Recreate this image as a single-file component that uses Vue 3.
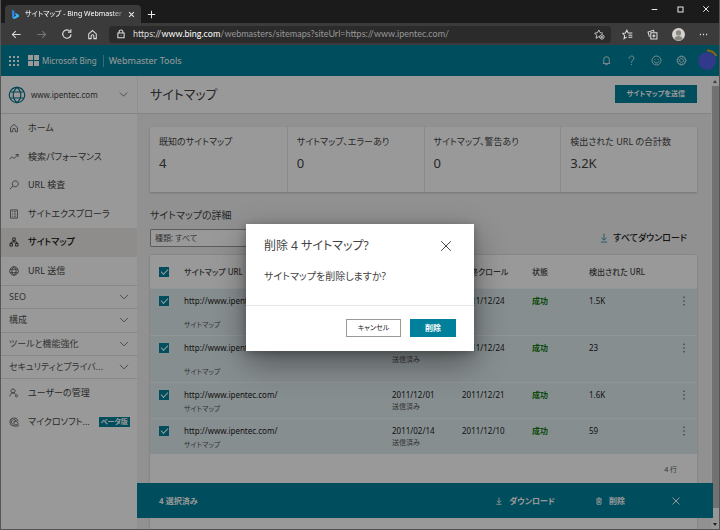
<script setup>
import { h, ref, computed } from 'vue'

const glyphs = {
  back: ['M14 8H2', 'M7 3L2 8l5 5'],
  forward: ['M2 8h12', 'M9 3l5 5-5 5'],
  reload: ['M13.5 8.5A5.6 5.6 0 1 1 12 4.2', 'M13.2 1.5v4h-4'],
  house: ['M2.5 7.2L8 2.2l5.500 5V14H10v-3.500a2 2 0 0 0-4 0V14H2.500z'],
  lock: ['M3 6.500h10v7.500H3z', 'M5 6.500V4.500a3 3 0 0 1 6 0v2', 'M8 9.800v1'],
  starAdd: ['M9 12l-2-1-4 2.500.8-4.500L1 6l4-.6L7 1.500l2 3.900 4 .6', 'M11.500 8.300a3.200 3.200 0 1 0 .01 0z', 'M11.500 9.800v3.400M9.800 11.500h3.400'],
  starList: ['M7 11.500l-4 2.500.8-4.500L1 6.300l4-.6L7 1.800l2 3.900h6', 'M9.500 9h5.500', 'M9.500 12h5.500'],
  collections: ['M5.500 5.500h9v9h-9z', 'M10 7.800v4.400M7.800 10h4.400', 'M3.500 11.500L1.500 4.500l8-2.500 1 3'],
  dots: ['M1.500 8h2M7 8h2M12.500 8h2'],
  minimize: ['M3 8h10'],
  maximize: ['M3.500 3.500h9v9h-9z'],
  close: ['M2.500 2.500l11 11M13.500 2.500l-11 11'],
  plus: ['M8 1.500v13M1.500 8h13'],
  bell: ['M4 11.500V6.500a4 4 0 0 1 8 0v5l1 1H3z', 'M6.500 14h3'],
  question: ['M4.500 5.300c0-5 7-4.800 7-.8 0 3-3.500 3-3.500 6.500', 'M8 13v1.500'],
  smile: ['M8 1.500a6.500 6.500 0 1 0 .01 0z', 'M5.500 5.700v1.300M10.500 5.700v1.300', 'M4.500 9c1 3.500 6 3.500 7 0'],
  gear: ['M6.700 1.500h2.600l.5 1.800 1.700-.8 1.900 1.900-.8 1.700 1.900.6v2.600l-1.900.6.8 1.700-1.900 1.900-1.700-.8-.5 1.800H6.700l-.5-1.800-1.700.8-1.900-1.900.8-1.700-1.900-.6V6.700l1.900-.6-.8-1.700 1.900-1.900 1.700.8z', 'M8 5.200a2.800 2.800 0 1 0 .01 0z'],
  globe: ['M8 1.200a6.800 6.800 0 1 0 .01 0z', 'M8 1.200c-4.500 4-4.500 9.600 0 13.600c4.500-4 4.500-9.600 0-13.600z', 'M2 5.300h12M2 10.700h12'],
  trend: ['M1 11.500l4-4 3 3 6.500-6.500', 'M10.500 4h4v4'],
  search: ['M10 1.300a4.800 4.800 0 1 0 .01 0z', 'M6.600 9.500L1.200 14.800'],
  list: ['M2.500 1.500h11v13h-11z', 'M5 4.500h1.500M8 4.500h3M5 8h1.500M8 8h3M5 11.500h1.500M8 11.500h3'],
  tree: ['M6 1.500h4v4H6z', 'M1.500 10.500h4v4h-4z', 'M10.500 10.500h4v4h-4z', 'M8 5.500V8M3.500 10.500V8h9v2.500'],
  user: ['M6.500 1.500a3.300 3.300 0 1 0 .01 0z', 'M1.500 13.500c0-7 8-7 9-3', 'M12 10.700a1.800 1.800 0 1 0 .01 0z'],
  clarity: ['M14.500 7A6.600 6.600 0 1 0 7 14.500', 'M11.800 7A4 4 0 1 0 6 11.500', 'M8 7h3.500L14.500 10v4.500H8z', 'M10 12h2.500'],
  chevron: ['M1.500 4.500L8 11l6.500-6.500'],
  download: ['M8 1v10', 'M4 7.500L8 11.500l4-4', 'M3 14.500h10'],
  trash: ['M2.500 4h11', 'M6 4V2h4v2', 'M4 4v10.500h8V4', 'M6.700 6.500v5.500M9.300 6.500v5.500'],
  more: ['M8 1v2M8 7v2M8 13v2']
}

const Icon = (props) =>
  h(
    'svg',
    {
      viewBox: '0 0 16 16',
      width: props.size,
      height: props.size,
      fill: 'none',
      stroke: 'currentColor',
      'stroke-width': props.weight,
      'aria-hidden': 'true'
    },
    glyphs[props.name].map((d) => h('path', { d }))
  )
Icon.props = { name: String, size: { default: 10 }, weight: { default: 1.2 } }

const nav = [
  { icon: 'house', label: 'ホーム' },
  { icon: 'trend', label: '検索パフォーマンス' },
  { icon: 'search', label: 'URL 検査' },
  { icon: 'list', label: 'サイトエクスプローラ' },
  { icon: 'tree', label: 'サイトマップ', active: true },
  { icon: 'globe', label: 'URL 送信' }
]
const groups = ['SEO', '構成', 'ツールと機能強化', 'セキュリティとプライバ...']
const tools = [
  { icon: 'bell', label: '通知' },
  { icon: 'question', label: 'ヘルプ' },
  { icon: 'smile', label: 'フィードバック' },
  { icon: 'gear', label: '設定' }
]
const stats = [
  { label: '既知のサイトマップ', value: '4' },
  { label: 'サイトマップ、エラーあり', value: '0' },
  { label: 'サイトマップ、警告あり', value: '0' },
  { label: '検出された URL の合計数', value: '3.2K' }
]
const rows = ref([
  { url: 'http://www.ipentec.com/', sent: '2011/12/01', crawl: '2011/12/24', count: '1.5K', tall: true, checked: true },
  { url: 'http://www.ipentec.com/', sent: '2011/12/01', crawl: '2011/12/24', count: '23', tall: true, checked: true },
  { url: 'http://www.ipentec.com/', sent: '2011/12/01', crawl: '2011/12/21', count: '1.6K', checked: true },
  { url: 'http://www.ipentec.com/', sent: '2011/02/14', crawl: '2011/12/10', count: '59', checked: true }
])
const allChecked = computed({
  get: () => rows.value.every((r) => r.checked),
  set: (v) => rows.value.forEach((r) => (r.checked = v))
})
const selected = computed(() => rows.value.filter((r) => r.checked).length)
const dialogOpen = ref(true)
</script>

<template>
  <div class="window">
    <div class="tabstrip">
      <div class="tab">
        <svg class="bing" viewBox="0 0 16 16" width="9" height="11" aria-hidden="true">
          <path d="M2 0l4 1.500v10L2 14z" fill="#2a8af0" />
          <path d="M7 5l7 3.500v3.500L6 16l-4-2 7-4z" fill="#35b8f0" />
        </svg>
        <span class="tab-title">サイトマップ - Bing Webmaster Too</span>
        <button class="plain" aria-label="タブを閉じる"><Icon name="close" :size="7" :weight="2.4" /></button>
      </div>
      <button class="plain new-tab" aria-label="新しいタブ"><Icon name="plus" :size="9" :weight="1.8" /></button>
      <div class="controls">
        <button class="plain" aria-label="最小化"><Icon name="minimize" :size="9" :weight="1.8" /></button>
        <button class="plain" aria-label="最大化"><Icon name="maximize" :size="9" :weight="1.8" /></button>
        <button class="plain" aria-label="閉じる"><Icon name="close" :size="8" :weight="2" /></button>
      </div>
    </div>

    <div class="toolbar">
      <button class="plain" aria-label="戻る"><Icon name="back" :size="11" :weight="1.5" /></button>
      <button class="plain faded" aria-label="進む"><Icon name="forward" :size="11" :weight="1.5" /></button>
      <button class="plain" aria-label="更新"><Icon name="reload" :size="12" :weight="1.5" /></button>
      <button class="plain" aria-label="ホーム"><Icon name="house" :size="11" :weight="1.5" /></button>
      <div class="address">
        <Icon name="lock" :size="10" :weight="1.7" />
        <span class="url"><b>https://<i>www.bing.com</i></b>/webmasters/sitemaps?siteUrl=https://www.ipentec.com/</span>
        <button class="plain" aria-label="お気に入りに追加"><Icon name="starAdd" :size="11" /></button>
      </div>
      <div class="extras">
        <button class="plain" aria-label="お気に入り"><Icon name="starList" :size="11" :weight="1.5" /></button>
        <button class="plain" aria-label="コレクション"><Icon name="collections" :size="11" :weight="1.5" /></button>
        <button class="plain" aria-label="プロフィール">
          <svg viewBox="0 0 16 16" width="13" height="13" aria-hidden="true">
            <circle cx="8" cy="8" r="8" fill="#d6d3cf" />
            <circle cx="8" cy="6" r="3.200" fill="#8a8682" />
            <path d="M3 13.500c0-5 10-5 10 0a8 8 0 0 1-10 0z" fill="#8a8682" />
          </svg>
        </button>
        <button class="plain" aria-label="その他"><Icon name="dots" :size="9" :weight="2.6" /></button>
      </div>
    </div>

    <div class="page">
      <header class="header">
        <svg class="waffle" viewBox="0 0 10 10" width="10" height="10" aria-hidden="true">
          <path d="M1 0v10M5 0v10M9 0v10" stroke="currentColor" stroke-width="2" stroke-dasharray="2 2" />
        </svg>
        <svg class="ms" viewBox="0 0 11 11" width="11" height="11" aria-hidden="true">
          <path d="M0 0h5v5H0zM6 0h5v5H6zM0 6h5v5H0zM6 6h5v5H6z" fill="currentColor" />
        </svg>
        <span class="brand">Microsoft Bing</span>
        <span class="product">Webmaster Tools</span>
        <div class="tools">
          <button v-for="t in tools" :key="t.icon" class="plain" :aria-label="t.label">
            <Icon :name="t.icon" :size="11" />
          </button>
          <svg class="avatar" viewBox="0 0 21 22" width="21" height="22" aria-hidden="true">
            <circle cx="10" cy="12" r="9" fill="#5260e6" />
            <path d="M10 1.500a10.500 10.500 0 0 1 9.300 5.500" fill="none" stroke="#f0ae10" stroke-width="2" />
          </svg>
        </div>
      </header>

      <div class="columns">
        <nav class="sidebar">
          <button class="site">
            <Icon name="globe" :size="18" :weight="1" class="site-globe" />
            <span>www.ipentec.com</span>
            <Icon name="chevron" :size="9" />
          </button>
          <div class="links six">
            <a v-for="n in nav" :key="n.label" href="#" class="link" :class="{ active: n.active }">
              <Icon :name="n.icon" :size="10" />{{ n.label }}
            </a>
          </div>
          <div class="groups">
            <button v-for="g in groups" :key="g" class="group">{{ g }}<Icon name="chevron" :size="10" /></button>
          </div>
          <div class="links two">
            <a href="#" class="link"><Icon name="user" :size="10" />ユーザーの管理</a>
            <a href="#" class="link"><Icon name="clarity" :size="10" />マイクロソフト...<span class="beta">ベータ版</span></a>
          </div>
        </nav>

        <main class="main">
          <div class="title-row">
            <h1>サイトマップ</h1>
            <button class="primary submit">サイトマップを送信</button>
          </div>

          <div class="content">
            <section class="stats">
              <div v-for="s in stats" :key="s.label" class="stat">
                <span class="stat-label">{{ s.label }}</span>
                <span class="stat-value">{{ s.value }}</span>
              </div>
            </section>

            <h2>サイトマップの詳細</h2>
            <div class="filters">
              <select class="filter" aria-label="種類">
                <option>種類: すべて</option>
              </select>
              <a href="#" class="download-all"><Icon name="download" :size="10" />すべてダウンロード</a>
            </div>

            <div class="panel">
              <table>
                <colgroup>
                  <col class="c-check" />
                  <col />
                  <col class="c-date" />
                  <col class="c-date" />
                  <col class="c-status" />
                  <col class="c-count" />
                  <col class="c-more" />
                </colgroup>
                <thead>
                  <tr>
                    <th><input v-model="allChecked" type="checkbox" aria-label="すべて選択" /></th>
                    <th>サイトマップ URL</th>
                    <th>送信日</th>
                    <th>最終クロール</th>
                    <th>状態</th>
                    <th>検出された URL</th>
                    <th></th>
                  </tr>
                </thead>
                <tbody>
                  <tr v-for="(r, i) in rows" :key="i" :class="{ tall: r.tall, chosen: r.checked }">
                    <td><input v-model="r.checked" type="checkbox" :aria-label="r.url" /></td>
                    <td class="address-cell">{{ r.url }}<small>サイトマップ</small></td>
                    <td>{{ r.sent }}<small>送信済み</small></td>
                    <td>{{ r.crawl }}</td>
                    <td class="ok">成功</td>
                    <td>{{ r.count }}</td>
                    <td><button class="plain row-more" aria-label="操作"><Icon name="more" :size="10" :weight="1.6" /></button></td>
                  </tr>
                </tbody>
              </table>
              <div class="total">{{ rows.length }} 行</div>
            </div>
          </div>
        </main>

        <div class="scrollbar" aria-hidden="true">
          <span class="arrow up"></span>
          <span class="thumb"></span>
          <span class="arrow down"></span>
        </div>
      </div>

      <div class="actions">
        <span class="count">{{ selected }} 選択済み</span>
        <button class="plain"><Icon name="download" :size="8" :weight="1.8" />ダウンロード</button>
        <button class="plain delete" @click="dialogOpen = true"><Icon name="trash" :size="8" :weight="1.8" />削除</button>
        <button class="plain" aria-label="選択を解除" @click="allChecked = false"><Icon name="close" :size="10" :weight="1.6" /></button>
      </div>

      <div v-if="dialogOpen" class="overlay">
        <div class="dialog" role="dialog" aria-labelledby="dialog-title">
          <div class="dialog-body">
            <div class="dialog-head">
              <h3 id="dialog-title">削除 4 サイトマップ?</h3>
              <button class="plain" aria-label="閉じる" @click="dialogOpen = false"><Icon name="close" :size="14" :weight="1.1" /></button>
            </div>
            <p>サイトマップを削除しますか?</p>
          </div>
          <div class="dialog-foot">
            <button class="secondary" @click="dialogOpen = false">キャンセル</button>
            <button class="primary" @click="dialogOpen = false">削除</button>
          </div>
        </div>
      </div>
    </div>
  </div>
</template>

<style>
body {
  background: #1b1b1b;
}
</style>

<style scoped>
.window,
.window * {
  box-sizing: border-box;
}
.window {
  display: flex;
  flex-direction: column;
  min-height: 100vh;
  font: 9px/12px 'Noto Sans', 'Noto Sans CJK JP', sans-serif;
  font-feature-settings: 'palt';
  color: #444;
  border: solid #555;
  border-width: 0 1px 1px;
}
h1, h2, h3, p {
  margin: 0;
  font-weight: 400;
}
svg {
  flex: none;
  display: block;
}
a {
  color: inherit;
  text-decoration: none;
}
button {
  font: inherit;
  font-feature-settings: inherit;
  color: inherit;
  border: 0;
  border-radius: 0;
  padding: 0;
  cursor: pointer;
}
.plain {
  display: flex;
  align-items: center;
  justify-content: center;
  background: none;
}

/* Browser chrome */
.tabstrip {
  display: flex;
  align-items: center;
  height: 23px;
  padding-left: 4px;
  background: #1b1b1b;
  color: #e8e8e8;
}
.tab {
  display: flex;
  align-items: center;
  align-self: flex-end;
  gap: 5px;
  width: 136px;
  height: 18px;
  padding: 0 6px;
  background: #3b3b3b;
  border-radius: 4px 4px 0 0;
}
.tab-title {
  flex: 1;
  overflow: hidden;
  white-space: nowrap;
  font-size: 7px;
  color: #fff;
  mask-image: linear-gradient(90deg, #000 88%, #0005);
}
.new-tab {
  align-self: flex-end;
  height: 18px;
  margin-left: 6px;
}
.controls {
  display: flex;
  gap: 17px;
  margin: 0 9px 5px auto;
}
.toolbar {
  display: flex;
  align-items: center;
  gap: 14px;
  height: 22px;
  padding-left: 10px;
  background: #3b3b3b;
  color: #ddd;
}
.faded {
  color: #777;
}
.address {
  flex: 1;
  display: flex;
  align-items: center;
  gap: 7px;
  height: 17px;
  margin-left: -3px;
  padding: 0 6px 0 7px;
  background: #2b2b2b;
  border-radius: 3px;
}
.url {
  flex: 1;
  font-family: Lato, 'Noto Sans', sans-serif;
  font-size: 9px;
  color: #999;
  white-space: nowrap;
  overflow: hidden;
}
.url b {
  font-weight: 400;
  color: #ddd;
}
.url i {
  font-style: normal;
  color: #fff;
}
.extras {
  display: flex;
  align-items: center;
  gap: 14px;
  margin: 0 11px 0 -3px;
}

/* Page */
.page {
  position: relative;
  flex: 1;
  display: flex;
  flex-direction: column;
}
.header {
  display: flex;
  align-items: center;
  height: 31px;
  padding: 0 3px 0 8px;
  background: #00809b;
  color: #fff;
}
.ms {
  margin-left: 9px;
}
.brand {
  margin-left: 3px;
  padding-right: 6px;
  border-right: 1px solid #66b3c3;
  font-size: 8px;
}
.product {
  margin-left: 5px;
}
.tools {
  display: flex;
  align-items: center;
  gap: 14px;
  margin-left: auto;
}
.avatar {
  margin: -2px -2px 0 -4px;
}
.columns {
  flex: 1;
  display: flex;
  background: #f2f2f2;
}
.sidebar {
  width: 136px;
  background: #fff;
}
.site {
  display: flex;
  align-items: center;
  gap: 5px;
  width: 100%;
  height: 38px;
  padding: 0 9px 0 7px;
  background: #fff;
  border-bottom: 1px solid #ddd;
  text-align: left;
}
.site span {
  flex: 1;
  font-size: 8px;
}
.site-globe {
  color: #00708a;
}
.links {
  display: grid;
  grid-auto-rows: 1fr;
}
.six {
  height: 171px;
}
.two {
  height: 57px;
}
.link {
  display: flex;
  align-items: center;
  gap: 9px;
  padding: 0 9px 0 8px;
  white-space: nowrap;
}
.active {
  background: #edebe9;
  font-weight: 500;
  color: #111;
}
.groups {
  display: grid;
  grid-auto-rows: 1fr;
  height: 94px;
  border-bottom: 1px solid #e1e1e1;
}
.group {
  display: flex;
  align-items: center;
  justify-content: space-between;
  padding: 0 8px;
  background: #fff;
  border-top: 1px solid #e1e1e1;
  color: #555;
}
.beta {
  margin-left: auto;
  padding: 0 2px;
  line-height: 10px;
  font-size: 7px;
  font-weight: 700;
  background: #00809b;
  color: #fff;
}
.main {
  flex: 1;
  min-width: 0;
  display: flex;
  flex-direction: column;
}
.title-row {
  display: flex;
  align-items: center;
  justify-content: space-between;
  height: 38px;
  padding: 0 14px 2px 12px;
  background: #fff;
  border-bottom: 1px solid #ddd;
  border-left: 1px solid #eee;
}
h1 {
  font-size: 13px;
  line-height: 18px;
}
.primary {
  background: #00809b;
  color: #fff;
  font-weight: 700;
}
.submit {
  height: 18px;
  padding: 0 12px;
  font-size: 7px;
}
.content {
  flex: 1;
  display: flex;
  flex-direction: column;
  padding: 13px 14px 0 13px;
}
.stats {
  display: grid;
  grid-template-columns: repeat(4, 1fr);
  background: #fff;
  box-shadow: 0 1px 2px #0003;
}
.stat {
  display: flex;
  flex-direction: column;
  gap: 6px;
  height: 65px;
  padding: 9px;
  white-space: nowrap;
}
.stat + .stat {
  border-left: 1px solid #e5e5e5;
}
.stat-value {
  font-size: 13px;
  line-height: 18px;
}
h2 {
  margin-top: 15px;
  font-size: 10px;
  line-height: 16px;
}
.filters {
  display: flex;
  align-items: center;
  justify-content: space-between;
  margin-top: 6px;
  padding-right: 10px;
}
.filter {
  width: 130px;
  height: 18px;
  padding: 0 4px;
  appearance: none;
  border: 1px solid #999;
  border-radius: 1px;
  background: #fff;
  font: inherit;
  font-size: 8px;
  font-feature-settings: inherit;
  color: #555;
}
.download-all {
  display: flex;
  align-items: center;
  gap: 4px;
  font-weight: 500;
  color: #222;
}
.download-all svg {
  color: #00809b;
}
.panel {
  flex: 1;
  margin-top: 8px;
  background: #fff;
  box-shadow: 0 0 2px #0003;
}
table {
  width: 100%;
  table-layout: fixed;
  border-collapse: collapse;
}
.c-check { width: 34px; }
.c-date { width: 70px; }
.c-status { width: 57px; }
.c-count { width: 90px; }
.c-more { width: 18px; }
th,
td {
  padding: 0;
  text-align: left;
  white-space: nowrap;
}
th {
  height: 33px;
  padding-top: 1px;
  font-size: 8px;
  font-weight: 500;
}
td {
  height: 36px;
  padding-top: 6px;
  vertical-align: top;
  border-top: 1px solid #f2f8f9;
  font-size: 8px;
  line-height: 12px;
  color: #222;
}
.tall td {
  height: 47px;
}
th:first-child,
td:first-child {
  padding-left: 9px;
}
.chosen {
  background: #e1edf0;
}
small {
  display: block;
  font-size: 7px;
  line-height: 12px;
  color: #555;
}
.address-cell small {
  padding-top: 2px;
}
.tall .address-cell small {
  padding-top: 12px;
}
.chosen .ok,
.ok {
  color: #107c10;
  font-weight: 700;
}
input {
  display: grid;
  place-items: center;
  width: 10px;
  height: 10px;
  margin: 1px 0 0;
  appearance: none;
  background: #fff;
  border: 1px solid #00809b;
}
input:checked {
  background: #00809b;
}
input:checked::after {
  content: '';
  width: 6px;
  height: 3px;
  margin-top: -2px;
  border: solid #fff;
  border-width: 0 0 1px 1px;
  transform: rotate(-45deg);
}
.row-more {
  height: 12px;
}
.total {
  padding: 10px 20px;
  font-size: 7px;
  text-align: right;
  color: #555;
}
.scrollbar {
  display: flex;
  flex-direction: column;
  align-items: center;
  gap: 3px;
  width: 8px;
  padding: 4px 0 3px;
  background: #fafafa;
}
.thumb {
  flex: 1;
  width: 7px;
  margin-bottom: 12px;
  background: #bcbcbc;
}
.arrow {
  border: 2px solid transparent;
}
.up {
  border-top: 0;
  border-bottom: 3px solid #666;
}
.down {
  border-bottom: 0;
  border-top: 3px solid #333;
}
.actions {
  position: absolute;
  right: 6px;
  bottom: 11px;
  left: 136px;
  display: flex;
  align-items: center;
  gap: 40px;
  height: 35px;
  padding: 0 32px 0 22px;
  background: #00809b;
  color: #fff;
  font-size: 8px;
  font-weight: 700;
}
.actions .plain {
  gap: 6px;
}
.actions .delete {
  margin-right: 6px;
}
.count {
  margin-right: auto;
}

/* Confirmation dialog */
.overlay {
  position: absolute;
  inset: 0;
  display: flex;
  align-items: center;
  justify-content: center;
  background: #0006;
}
.dialog {
  width: 228px;
  background: #fff;
  box-shadow: 0 12px 30px #0006, 0 2px 8px #0004;
}
.dialog-body {
  padding: 12px 18px 21px;
  border-bottom: 1px solid #e5e5e5;
}
.dialog-head {
  display: flex;
  align-items: center;
  justify-content: space-between;
  height: 20px;
  padding-right: 3px;
}
h3 {
  font-size: 12px;
  line-height: 20px;
}
p {
  margin-top: 12px;
  font-size: 10px;
  line-height: 16px;
}
.dialog-foot {
  display: flex;
  justify-content: flex-end;
  gap: 9px;
  padding: 13px 18px 14px;
}
.dialog-foot button {
  height: 18px;
  font-size: 8px;
}
.dialog-foot .primary {
  width: 46px;
}
.dialog-foot .secondary {
  width: 55px;
  background: #fff;
  border: 1px solid #999;
  font-size: 7px;
  color: #222;
}
</style>
